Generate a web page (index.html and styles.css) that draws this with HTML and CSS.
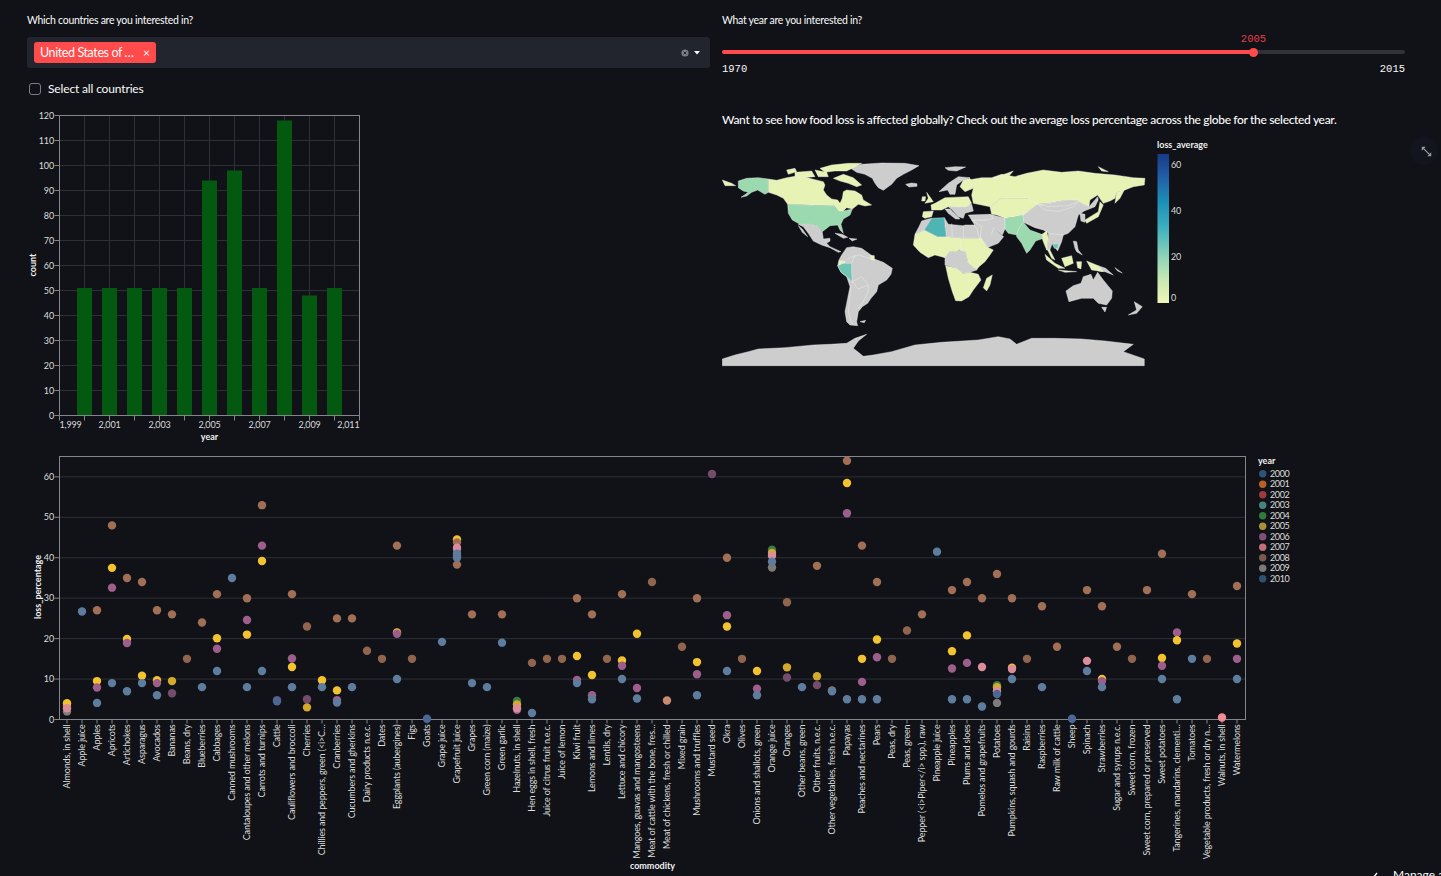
FILE: index.html
```html
<!DOCTYPE html>
<html lang="en">
<head>
    <meta charset="UTF-8">
    <meta name="viewport" content="width=device-width, initial-scale=1.0">
    <title>Food Loss Dashboard</title>
    <link rel="stylesheet" href="styles.css">
</head>
<body>
    <main class="page">
        <div class="columns">
            <section class="column">
                <label class="field-label">Which countries are you interested in?</label>
                <div class="select-box">
                    <span class="tag"><span class="tag-text">United States of …</span><span class="tag-close">&times;</span></span>
                    <span class="select-icons">
                        <svg class="clear-icon" width="8" height="8" viewBox="0 0 8 8">
                            <circle cx="4" cy="4" r="3.6" fill="#7b7e88"/>
                            <path d="M2.6 2.6l2.8 2.8M5.4 2.6L2.6 5.4" stroke="#22242e" stroke-width="1"/>
                        </svg>
                        <svg class="caret-icon" width="6" height="4" viewBox="0 0 6 4"><path d="M0 0h6L3 3.6z" fill="#fafafa"/></svg>
                    </span>
                </div>
                <div class="check-row">
                    <span class="checkbox"></span>
                    <span>Select all countries</span>
                </div>
                <svg id="bar-chart" class="chart bar-chart" viewBox="27 108 340 335"></svg>
            </section>

            <section class="column">
                <label class="field-label">What year are you interested in?</label>
                <div class="slider">
                    <div class="slider-track">
                        <div class="slider-fill" style="width: 77.9%">
                            <span class="slider-value">2005</span>
                            <span class="slider-thumb"></span>
                        </div>
                    </div>
                    <div class="slider-ends">
                        <span>1970</span>
                        <span>2015</span>
                    </div>
                </div>
                <p class="map-heading">Want to see how food loss is affected globally? Check out the average loss percentage across the globe for the selected year.</p>

                <svg class="chart map-chart" viewBox="722 135 500 240">
                    <defs>
                        <linearGradient id="loss-scale" x1="0" y1="1" x2="0" y2="0">
                            <stop offset="0" stop-color="#eef6b6"/>
                            <stop offset="0.15" stop-color="#c9e9b2"/>
                            <stop offset="0.33" stop-color="#86d1b8"/>
                            <stop offset="0.5" stop-color="#3fb1bf"/>
                            <stop offset="0.68" stop-color="#1c8fb8"/>
                            <stop offset="0.85" stop-color="#215da6"/>
                            <stop offset="1" stop-color="#183a86"/>
                        </linearGradient>
                    </defs>
                    <g class="world" transform="translate(715 135) scale(0.3333)">
                        <!-- grey = no data -->
                        <g class="land-none">
                            <path d="M405 98L440 88L500 84L570 85L612 92L590 105L565 118L545 130L530 148L505 166L490 158L480 145L472 130L450 118L425 112Z"/>
                            <path d="M572 148L590 144L606 146L606 154L582 156Z"/>
                            <path d="M690 98L720 95L752 96L725 108L700 106Z"/>
                            <path d="M672 170L700 145L730 125L765 128L745 135L725 150L720 178L705 178L698 165Z"/>
                            <path d="M250 268L290 268L310 275L322 292L325 312L345 310L345 318L335 325L345 335L378 350L370 352L345 338L320 330L295 318L280 295L265 275Z"/>
                            <path d="M250 272L262 282L278 305L262 292Z"/>
                            <path d="M360 295L382 298L398 307L385 310L372 302Z"/>
                            <path d="M402 310L426 312L412 318Z"/>
                            <path d="M395 338L415 335L440 340L465 358L478 372L505 382L532 400L528 418L515 435L490 450L485 470L468 490L458 505L442 515L430 530L425 560L428 572L405 570L395 560L390 530L398 490L405 455L395 425L378 412L368 392L372 375L380 360Z"/>
                            <path d="M620 258L640 252L650 250L628 285L600 298L612 275Z"/>
                            <path d="M688 248L700 268L745 272L750 270L790 270L800 310L740 310L694 305L690 272Z"/>
                            <path d="M690 368L705 348L725 350L745 338L752 350L760 385L785 405L765 412L745 416L725 400L690 390Z"/>
                            <path d="M770 255L815 255L835 280L866 305L850 325L812 340L795 315L785 280Z"/>
                            <path d="M825 238L870 250L870 282L862 300L835 280L815 255Z"/>
                            <path d="M760 240L825 238L835 250L815 255L770 255Z"/>
                            <path d="M700 215L770 208L775 228L750 235L745 250L730 245L712 225Z"/>
                            <path d="M690 222L705 222L735 252L722 252L700 235Z"/>
                            <path d="M920 240L945 225L968 208L1000 205L1040 197L1085 195L1100 205L1122 215L1135 200L1148 185L1150 195L1140 215L1108 228L1090 240L1080 275L1060 295L1040 302L1010 300L985 285L960 278L925 262Z"/>
                            <path d="M1095 235L1110 238L1110 262L1098 258Z"/>
                            <path d="M1000 295L1045 300L1040 320L1028 348L1012 325L1005 345L995 345L1000 310Z"/>
                            <path d="M1075 318L1085 320L1090 345L1102 360L1085 350L1080 340Z"/>
                            <path d="M1150 392L1172 400L1195 420L1170 410L1150 408Z"/>
                            <path d="M1200 398L1222 414L1208 408Z"/>
                            <path d="M1053 468L1075 452L1098 445L1105 425L1128 418L1135 435L1148 412L1165 435L1192 468L1190 490L1175 510L1150 505L1135 490L1100 490L1062 500Z"/>
                            <path d="M1160 517L1175 517L1170 531Z"/>
                            <path d="M1240 540L1265 525L1258 500L1282 515L1265 535Z"/>
                            <path d="M435 560L452 556L448 563Z"/>
                            <path d="M22 672L60 660L100 650L130 642L210 638L295 630L345 628L395 625L420 610L455 598L430 618L415 640L445 664L475 660L530 650L600 630L680 622L790 615L850 605L885 612L905 628L950 610L1020 610L1100 612L1170 618L1255 628L1225 650L1288 672L1288 692L22 692Z"/>
                        </g>
                        <!-- lowest band, pale yellow green -->
                        <g class="land-low">
                            <path d="M22 135L50 145L62 152L30 152Z"/>
                            <path d="M160 132L185 136L215 128L240 124L270 126L300 134L325 140L330 150L325 165L335 180L350 192L368 195L375 205L382 190L385 170L395 165L420 168L440 180L445 195L470 210L450 213L430 208L412 222L395 218L385 228L370 228L358 212L218 208L205 190L185 180L160 172Z"/>
                            <path d="M315 100L350 90L400 85L440 85L415 98L395 108L360 108L330 112Z"/>
                            <path d="M355 130L385 118L415 128L440 150L425 155L400 145L375 138Z"/>
                            <path d="M240 112L290 108L300 125L265 128L240 125Z"/>
                            <path d="M215 105L240 100L245 110L220 118Z"/>
                            <path d="M300 105L335 112L340 125L310 125Z"/>
                            <path d="M600 298L628 285L668 305L694 305L740 310L745 335L725 350L705 348L690 368L660 360L640 368L615 352L595 330Z"/>
                            <path d="M740 310L800 310L815 335L835 345L825 360L810 380L792 395L785 405L760 385L752 350L735 345Z"/>
                            <path d="M692 392L725 400L745 416L765 412L790 418L798 435L775 465L762 485L740 498L722 497L712 470L700 430Z"/>
                            <path d="M832 420L825 450L815 468L805 458L815 430Z"/>
                            <path d="M635 172L648 190L655 200L630 205L640 190Z"/>
                            <path d="M622 185L632 185L630 198L620 198Z"/>
                            <path d="M625 230L655 228L650 245L630 250L622 245Z"/>
                            <path d="M745 135L765 130L775 160L750 170L735 155Z"/>
                            <path d="M660 205L690 188L760 185L770 205L755 215L700 215L680 225L650 225L648 210Z"/>
                            <path d="M760 135L800 128L830 128L860 118L900 125L935 115L985 105L1040 112L1090 108L1140 115L1200 120L1255 128L1290 130L1288 150L1255 155L1230 165L1205 172L1200 190L1185 198L1165 205L1158 195L1148 180L1125 195L1122 215L1100 205L1085 195L1040 197L1000 205L960 208L935 190L860 190L825 215L800 210L775 205L770 180L775 160Z"/>
                            <path d="M825 215L860 190L935 190L968 208L945 225L925 240L900 245L870 250L845 240L830 238Z"/>
                            <path d="M835 130L895 108L880 125Z"/>
                            <path d="M1205 172L1228 165L1215 190L1200 205Z"/>
                            <path d="M1150 95L1180 110L1160 108Z"/>
                            <path d="M1115 265L1150 245L1165 210L1155 200L1150 230L1110 255Z"/>
                            <path d="M978 300L995 288L1000 310L995 345L985 320Z"/>
                            <path d="M998 345L1005 345L1020 375L1010 370Z"/>
                            <path d="M990 358L1020 385L1050 400L1030 400L995 375Z"/>
                            <path d="M1030 405L1085 410L1050 412Z"/>
                            <path d="M1040 370L1070 362L1075 385L1050 395Z"/>
                            <path d="M1085 380L1100 380L1098 402L1088 398Z"/>
                            <path d="M1115 378L1150 392L1165 410L1130 405Z"/>
                            <path d="M372 378L390 378L385 392L372 392Z"/>
                            <path d="M465 360L478 362L478 376L468 374Z"/>
                        </g>
                        <path class="land-mid" d="M70 138L95 130L130 128L160 132L160 172L150 178L128 165L110 172L95 183L78 187L100 172L85 168L70 158Z"/>
                        <path class="land-mid" d="M218 208L358 212L372 228L385 228L412 222L405 240L385 252L378 268L385 295L375 285L368 270L345 272L322 290L310 275L290 268L255 268L232 255L220 235Z"/>
                        <path class="land-mid" d="M905 280L925 262L945 285L980 298L985 310L962 318L945 345L935 355L920 325L905 305Z"/>
                        <path class="land-mid" d="M870 250L900 245L925 240L925 262L912 280L905 300L880 295L870 282Z"/>
                        <path class="land-high" d="M650 250L688 248L690 272L694 305L668 305L628 285Z"/>
                        <path class="land-peru" d="M368 392L385 385L410 385L410 410L412 440L395 425L378 412Z"/>
                        <path class="land-peru" d="M1012 328L1030 325L1030 340L1018 340Z"/>
                        <path class="border-line" d="M395 372L430 360L470 372M410 385L420 360M412 440L440 425L460 450L460 470L445 500L430 520M408 450L400 530L410 565M412 440L430 462L460 450"/>
                        <path class="border-line" d="M968 208L1000 215L1060 212L1090 200L1075 215L1030 230L990 225Z"/>
                        <path class="border-line" d="M770 255L800 275L795 315M835 280L830 300M710 265L712 305M745 272L745 310"/>
                    </g>
                    <g class="legend-scale">
                        <text class="axis-title" x="1157" y="148">loss_average</text>
                        <rect x="1157.5" y="154" width="11.5" height="149" fill="url(#loss-scale)"/>
                        <text x="1171" y="168">60</text>
                        <text x="1171" y="214">40</text>
                        <text x="1171" y="260">20</text>
                        <text x="1171" y="301">0</text>
                    </g>
                </svg>
            </section>
        </div>

        <svg id="scatter-chart" class="chart scatter-chart" viewBox="27 450 1300 426"></svg>
    </main>

    <button class="fullscreen-button">
        <svg width="11" height="11" viewBox="0 0 14 14">
            <path d="M1 1h5L1 6zM13 13H8l5-5z" fill="#9a9ca0"/>
            <path d="M3 3l8 8" stroke="#9a9ca0" stroke-width="1.6"/>
        </svg>
    </button>
    <div class="manage-app">
        <svg width="10" height="8" viewBox="0 0 10 8"><path d="M2 7l4-5" stroke="#fafafa" stroke-width="1.3" fill="none"/></svg>
        <span>Manage app</span>
    </div>

    <script src="app.js"></script>
</body>
</html>
```

FILE: styles.css
```css
html, body {
    margin: 0;
    padding: 0;
    height: 100%;
    overflow: hidden;
}
body {
    font-family: Lato, "Noto Sans", sans-serif;
    color: #fafafa;
    background-color: #101217;
    font-size: 12px;
}
.page {
    padding: 13px 36px 0 27px;
}
.columns {
    display: grid;
    grid-template-columns: 683px 683px;
    gap: 12px;
    height: 437px;
}
.field-label {
    display: block;
    line-height: 14px;
    font-size: 10.5px;
    letter-spacing: -0.28px;
}
.select-box {
    display: flex;
    align-items: center;
    justify-content: space-between;
    height: 31px;
    margin-top: 10px;
    padding: 0 10px 0 7px;
    background-color: #22242e;
    border-radius: 3px;
}
.tag {
    display: flex;
    align-items: center;
    justify-content: space-between;
    width: 110px;
    height: 21px;
    padding: 0 6px;
    font-size: 12.5px;
    background-color: #ff4b4b;
    border-radius: 3px;
}
.tag-text {
    letter-spacing: -0.4px;
}
.tag-close {
    font-size: 12px;
}
.select-icons {
    display: flex;
    align-items: center;
    gap: 5px;
}
.check-row {
    display: flex;
    align-items: center;
    gap: 7px;
    height: 14px;
    margin-top: 14px;
    padding-left: 2px;
    font-size: 12px;
    letter-spacing: -0.15px;
    line-height: 12px;
}
.checkbox {
    width: 10px;
    height: 10px;
    border: 1px solid #7a7d85;
    border-radius: 3px;
}
.chart {
    display: block;
}
.chart text {
    font-family: Lato, "Noto Sans", sans-serif;
    font-size: 9px;
    letter-spacing: -0.15px;
    fill: #dcdcdc;
}
.chart .axis-title {
    font-weight: bold;
    letter-spacing: 0;
    fill: #f0f0f0;
}
.chart .legend-label {
    letter-spacing: -0.4px;
}
.bar-chart {
    width: 340px;
    height: 335px;
    margin-top: 12px;
}
.slider {
    padding-top: 23px;
}
.slider-track {
    height: 4px;
    border-radius: 2px;
    background-color: #30323a;
}
.slider-fill {
    position: relative;
    height: 4px;
    border-radius: 2px;
    background-color: #ff4b4b;
}
.slider-thumb {
    position: absolute;
    right: -4px;
    top: -2.5px;
    width: 9px;
    height: 9px;
    border-radius: 50%;
    background-color: #ff4b4b;
}
.slider-value {
    position: absolute;
    right: -12px;
    top: -17.5px;
    font-family: "Liberation Mono", monospace;
    font-size: 10.5px;
    color: #e0404a;
}
.slider-ends {
    display: flex;
    justify-content: space-between;
    margin-top: 8.5px;
    font-family: "Liberation Mono", monospace;
    font-size: 10.5px;
}
.map-heading {
    margin: 37.5px 0 0;
    line-height: 16px;
    font-size: 12px;
    letter-spacing: -0.33px;
    font-weight: 500;
}
.map-chart {
    width: 500px;
    height: 240px;
    margin-top: 7px;
}
.world path {
    stroke: #f4f4f4;
    stroke-width: 1.2;
    stroke-linejoin: round;
}
.land-none path {
    fill: #cdcdcd;
}
.land-low path {
    fill: #e6f3b5;
}
.world .land-mid {
    fill: #9bd9ae;
}
.world .land-high {
    fill: #4fb4b4;
}
.world .land-peru {
    fill: #6fc6b4;
}
.world .border-line {
    fill: none;
}
.scatter-chart {
    width: 1300px;
    height: 426px;
}
.grid-line {
    stroke: #2e3036;
    stroke-width: 1;
}
.axis-line {
    stroke: #85868a;
    stroke-width: 1;
}
.fullscreen-button {
    position: absolute;
    left: 1410px;
    top: 137px;
    display: flex;
    align-items: center;
    justify-content: center;
    width: 28px;
    height: 28px;
    padding: 0 0 0 4px;
    border: none;
    border-radius: 50%;
    background-color: #12151d;
}
.manage-app {
    position: absolute;
    left: 1371px;
    top: 867px;
    display: flex;
    align-items: center;
    gap: 12px;
    width: 90px;
    font-size: 12px;
    white-space: nowrap;
}
```

FILE: app.js
```js
const SVG_NS = 'http://www.w3.org/2000/svg';

function add(parent, tag, attrs, text) {
    const el = document.createElementNS(SVG_NS, tag);
    Object.keys(attrs).forEach(key => el.setAttribute(key, attrs[key]));
    if (text !== undefined) el.textContent = text;
    parent.appendChild(el);
    return el;
}

// Rows per year, first chart
function drawBarChart() {
    const svg = document.getElementById('bar-chart');
    const counts = [51, 51, 51, 51, 51, 94, 98, 51, 118, 48, 51];
    const left = 59.5, right = 359.5, top = 115.5, bottom = 415.5;

    for (let v = 0; v <= 120; v += 10) {
        const y = bottom - v * 2.5;
        add(svg, 'line', { class: 'grid-line', x1: left, x2: right, y1: y, y2: y });
        add(svg, 'line', { class: 'axis-line', x1: left - 5, x2: left, y1: y, y2: y });
        add(svg, 'text', { x: left - 5.5, y: y + 3, 'text-anchor': 'end' }, v);
    }
    for (let year = 1999; year <= 2011; year++) {
        const x = left + (year - 1999) * 25;
        add(svg, 'line', { class: 'grid-line', x1: x, x2: x, y1: top, y2: bottom });
        add(svg, 'line', { class: 'axis-line', x1: x, x2: x, y1: bottom, y2: bottom + 5 });
        if (year % 2 === 1) {
            const anchor = year === 1999 ? 'start' : year === 2011 ? 'end' : 'middle';
            const label = String(year).replace(/^2|^1/, m => m + ',');
            add(svg, 'text', { x: x, y: bottom + 12.5, 'text-anchor': anchor }, label);
        }
    }
    counts.forEach((count, i) => {
        const x = left + (i + 1) * 25;
        add(svg, 'rect', { x: x - 7.5, y: bottom - count * 2.5, width: 15, height: count * 2.5, fill: '#03590f' });
    });
    add(svg, 'rect', { x: left, y: top, width: right - left, height: bottom - top, fill: 'none', class: 'axis-line' });
    add(svg, 'text', { class: 'axis-title', x: 209.5, y: 439.5, 'text-anchor': 'middle' }, 'year');
    add(svg, 'text', { class: 'axis-title', transform: 'translate(36 265) rotate(-90)', 'text-anchor': 'middle' }, 'count');
}

const dotColors = {
    b: '#a06f55', c: '#8f654e', y: '#f3c22f', p: '#9e5e8c', l: '#5e7d9e', d: '#744c6c',
    g: '#d3a92e', k: '#dd8c9c', s: '#c98a74', e: '#7e7b78', n: '#3a7a44', v: '#4c6794', r: '#f28d93'
};

const commodities = [
    ['Almonds, in shell', 'e2 b3.5 y4 k2.8'],
    ['Apple juice', 'l26.7'],
    ['Apples', 'b27 y9.5 p7.9 l4.1'],
    ['Apricots', 'b48 y37.5 p32.6 l9'],
    ['Artichokes', 'b35 y19.9 p18.9 l7'],
    ['Asparagus', 'b34 y10.8 l9'],
    ['Avocados', 'b27 y9.7 p9 l6'],
    ['Bananas', 'b26 g9.5 d6.5'],
    ['Beans, dry', 'c15'],
    ['Blueberries', 'b24 l8'],
    ['Cabbages', 'b31 y20.1 p17.5 l12'],
    ['Canned mushrooms', 'l35'],
    ['Cantaloupes and other melons', 'b30 p24.6 y21 l8'],
    ['Carrots and turnips', 'b53 p43 y39.2 l12'],
    ['Cattle', 'd4.8 v4.5'],
    ['Cauliflowers and broccoli', 'b31 p15.1 y13 l8'],
    ['Cherries', 'c23 d5 g3'],
    ['Chillies and peppers, green (<i>C…', 'y9.7 l8'],
    ['Cranberries', 'b25 y7.2 p4.8 l4.2'],
    ['Cucumbers and gherkins', 'b25 l8'],
    ['Dairy products n.e.c.', 'c17'],
    ['Dates', 'c15'],
    ['Eggplants (aubergines)', 'b43 y21.5 p21.2 l10'],
    ['Figs', 'c15'],
    ['Goats', 'v0.2'],
    ['Grape juice', 'l19.2'],
    ['Grapefruit juice', 'b38.3 y44.5 b43.8 p42 k42.5 e40.5 l41 l40'],
    ['Grapes', 'b26 l9'],
    ['Green corn (maize)', 'l8'],
    ['Green garlic', 'b26 l19'],
    ['Hazelnuts, in shell', 'n4.6 g3.7 p2.4 k2.8'],
    ['Hen eggs in shell, fresh', 'c14 l1.6'],
    ['Juice of citrus fruit n.e.c.', 'c15'],
    ['Juice of lemon', 'c15'],
    ['Kiwi fruit', 'b30 y15.7 p9.8 l9'],
    ['Lemons and limes', 'b26 y11 p6 l5'],
    ['Lentils, dry', 'c15'],
    ['Lettuce and chicory', 'b31 y14.6 p13.3 l10'],
    ['Mangoes, guavas and mangosteens', 'y21.2 p7.8 l5.2'],
    ['Meat of cattle with the bone, fres…', 'c34'],
    ['Meat of chickens, fresh or chilled', 's4.7'],
    ['Mixed grain', 'c18'],
    ['Mushrooms and truffles', 'b30 y14.2 p11.2 l6'],
    ['Mustard seed', 'd60.7'],
    ['Okra', 'b40 p25.8 y23 l12'],
    ['Olives', 'c15'],
    ['Onions and shallots, green', 'y12 p7.6 l6'],
    ['Orange juice', 'n42 g41.2 k40.5 e37.6 l39'],
    ['Oranges', 'c29 g12.9 d10.4'],
    ['Other beans, green', 'l8'],
    ['Other fruits, n.e.c.', 'b38 g10.7 d8.5'],
    ['Other vegetables, fresh n.e.c.', 'b7.2 l7'],
    ['Papayas', 'b64 y58.5 p51 l5'],
    ['Peaches and nectarines', 'b43 y15 p9.3 l5'],
    ['Pears', 'b34 y19.8 p15.4 l5'],
    ['Peas, dry', 'c15'],
    ['Peas, green', 'c22'],
    ['Pepper (<i>Piper</i> spp.), raw', 'b26'],
    ['Pineapple juice', 'l41.5'],
    ['Pineapples', 'b32 y16.9 p12.6 l5'],
    ['Plums and sloes', 'b34 y20.8 p14 l5'],
    ['Pomelos and grapefruits', 'b30 k13 l3.2'],
    ['Potatoes', 'b36 e4.1 n8.5 g8 k7 v6.3'],
    ['Pumpkins, squash and gourds', 'b30 y12.8 k12.5 l10'],
    ['Raisins', 'c15'],
    ['Raspberries', 'b28 l8'],
    ['Raw milk of cattle', 'b18'],
    ['Sheep', 'v0.2'],
    ['Spinach', 'b32 k14.5 l12'],
    ['Strawberries', 'b28 y10 p9.5 l8'],
    ['Sugar and syrups n.e.c.', 'b18'],
    ['Sweet corn, frozen', 'c15'],
    ['Sweet corn, prepared or preserved', 'b32'],
    ['Sweet potatoes', 'b41 y15.2 p13.3 l10'],
    ['Tangerines, mandarins, clementi…', 'p21.5 y19.6 l5'],
    ['Tomatoes', 'b31 l15'],
    ['Vegetable products, fresh or dry n…', 'c15'],
    ['Walnuts, in shell', 'r0.5'],
    ['Watermelons', 'b33 y18.8 p15 l10']
];

const legendYears = [
    ['2000', '#2f5378'], ['2001', '#b5622a'], ['2002', '#9c3c3f'], ['2003', '#47847c'],
    ['2004', '#2f7a3e'], ['2005', '#a89038'], ['2006', '#7e5278'], ['2007', '#c06e7a'],
    ['2008', '#7a5a4c'], ['2009', '#7c7a76'], ['2010', '#2d5272']
];

function drawScatterChart() {
    const svg = document.getElementById('scatter-chart');
    const left = 59.5, right = 1245.5, top = 456.5, bottom = 719.5;
    const scale = 4.044;

    for (let v = 0; v <= 60; v += 10) {
        const y = bottom - v * scale;
        add(svg, 'line', { class: 'grid-line', x1: left, x2: right, y1: y, y2: y });
        add(svg, 'line', { class: 'axis-line', x1: left - 5, x2: left, y1: y, y2: y });
        add(svg, 'text', { x: left - 5.5, y: y + 3, 'text-anchor': 'end' }, v);
    }
    add(svg, 'rect', { x: left, y: top, width: right - left, height: bottom - top, fill: 'none', class: 'axis-line' });

    commodities.forEach((item, i) => {
        const x = 67 + i * 15;
        add(svg, 'line', { class: 'axis-line', x1: x, x2: x, y1: bottom, y2: bottom + 4 });
        add(svg, 'text', { transform: `translate(${x + 3} ${bottom + 5}) rotate(-90)`, 'text-anchor': 'end' }, item[0]);
        item[1].split(' ').forEach(point => {
            const value = parseFloat(point.slice(1));
            add(svg, 'circle', { cx: x, cy: bottom - value * scale, r: 4.2, fill: dotColors[point[0]] });
        });
    });

    add(svg, 'text', { class: 'axis-title', x: 652.5, y: 869, 'text-anchor': 'middle' }, 'commodity');
    add(svg, 'text', { class: 'axis-title', transform: 'translate(41 587) rotate(-90)', 'text-anchor': 'middle' }, 'loss_percentage');

    add(svg, 'text', { class: 'axis-title', x: 1258, y: 464 }, 'year');
    legendYears.forEach((item, i) => {
        const y = 473.7 + i * 10.5;
        add(svg, 'circle', { cx: 1262.7, cy: y, r: 3.7, fill: item[1] });
        add(svg, 'text', { class: 'legend-label', x: 1270, y: y + 3 }, item[0]);
    });
}

drawBarChart();
drawScatterChart();
```
